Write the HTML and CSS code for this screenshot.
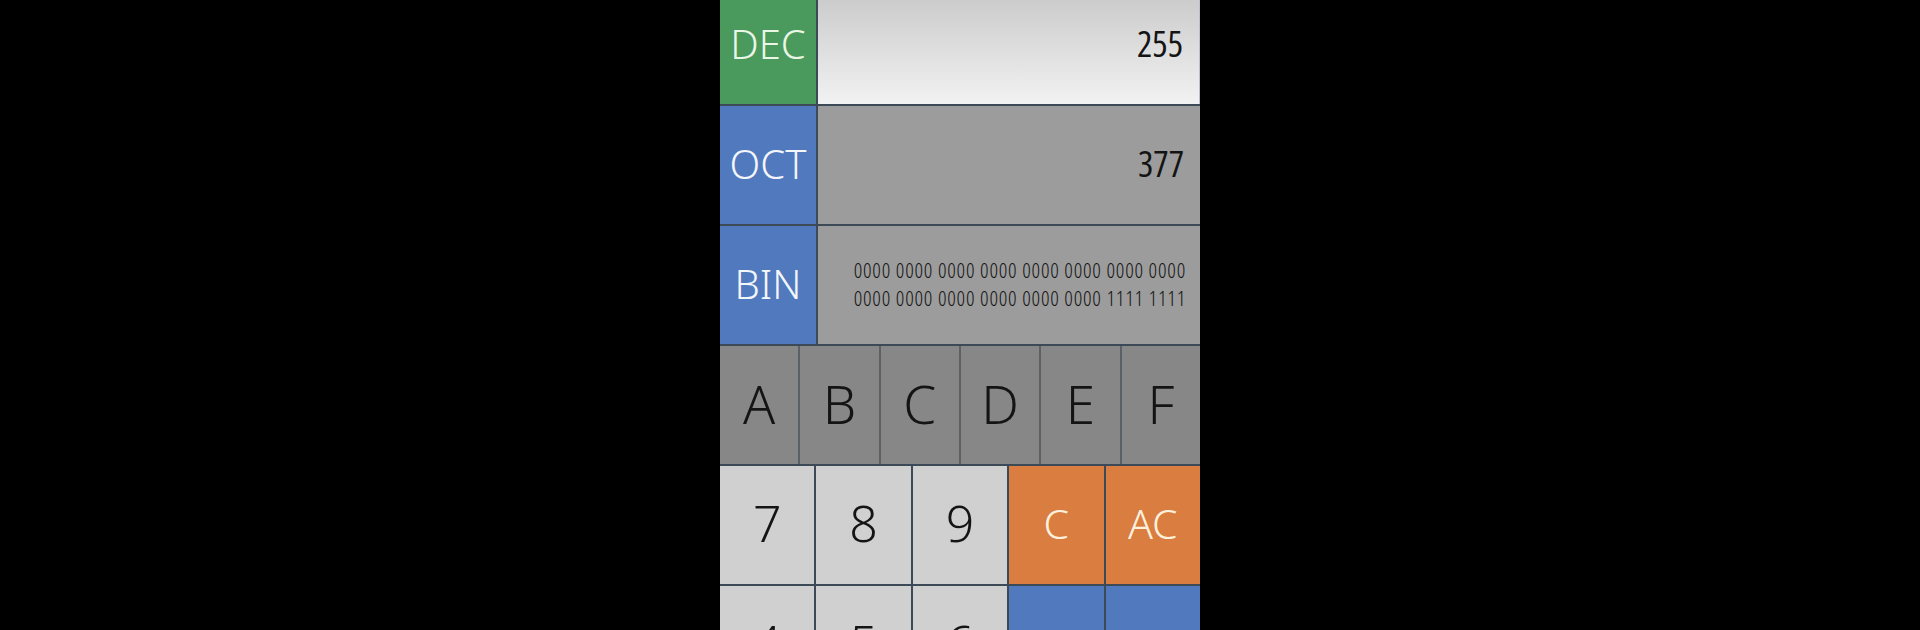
FILE: index.html
```html
<!DOCTYPE html>
<html>
<head>
    <meta http-equiv="Content-Type" content="text/html; charset=utf-8"/>
    <title>Hex Calculator</title>
    <link rel="stylesheet" href="styles.css">
</head>
<body>
<div class="calc">
    <div class="base-row first">
        <div class="base-label dec">DEC</div>
        <div class="base-value active">255</div>
    </div>
    <div class="base-row">
        <div class="base-label">OCT</div>
        <div class="base-value">377</div>
    </div>
    <div class="base-row">
        <div class="base-label">BIN</div>
        <div class="base-value bin">
            <span>0000 0000 0000 0000 0000 0000 0000 0000</span>
            <span>0000 0000 0000 0000 0000 0000 1111 1111</span>
        </div>
    </div>

    <div class="hex-keys">
        <div class="key hex">A</div>
        <div class="key hex">B</div>
        <div class="key hex">C</div>
        <div class="key hex">D</div>
        <div class="key hex">E</div>
        <div class="key hex">F</div>
    </div>

    <div class="pad-keys">
        <div class="key digit">7</div>
        <div class="key digit">8</div>
        <div class="key digit">9</div>
        <div class="key clear">C</div>
        <div class="key clear">AC</div>

        <div class="key digit">4</div>
        <div class="key digit">5</div>
        <div class="key digit">6</div>
        <div class="key op"></div>
        <div class="key op"></div>
    </div>
</div>
</body>
</html>
```

FILE: styles.css
```css
* {
    box-sizing: border-box;
    font-family: "Open Sans", "DejaVu Sans Condensed", sans-serif;
    font-stretch: 75%;
    font-weight: 300;
    color: #141414;
}

html, body {
    margin: 0;
    height: 100%;
    background: #000;
    overflow: hidden;
}

/* main panel */
.calc {
    width: 480px;
    margin: -14px auto 0;
    display: flex;
    flex-direction: column;
    gap: 2px;
    background: #3c4956;
}

.base-row {
    height: 118px;
    display: flex;
    gap: 2px;
}

.base-label {
    width: 96px;
    display: flex;
    align-items: center;
    justify-content: center;
    padding-bottom: 4px;
    background: #5179bd;
    color: #f3f6fb;
    font-family: "Noto Sans", "Open Sans", sans-serif;
    font-stretch: 87.5%;
    font-size: 40px;
}

.base-label.dec {
    background: #4b9a5d;
    color: #eaf6e6;
}

.base-value {
    flex: 1;
    display: flex;
    align-items: center;
    justify-content: flex-end;
    padding: 0 16px 4px 0;
    background: #9c9c9c;
    font-size: 36px;
    font-weight: 400;
}

.base-value.active {
    background: linear-gradient(#c7c7c7, #f2f2f2);
    border-right: 1px solid #b9c0c7;
}

.base-value.bin {
    flex-direction: column;
    align-items: flex-end;
    justify-content: center;
    font-size: 21px;
    line-height: 28px;
    letter-spacing: 0.8px;
    padding: 0 14px 2px 0;
    white-space: nowrap;
}

/* keys */
.hex-keys {
    display: grid;
    grid-template-columns: repeat(6, 1fr);
    gap: 2px;
    background: #5b6066;
}

.pad-keys {
    display: grid;
    grid-template-columns: repeat(5, 1fr);
    grid-auto-rows: 118px;
    gap: 2px;
    height: 200px;
}

.key {
    height: 118px;
    display: flex;
    align-items: center;
    justify-content: center;
    padding-bottom: 4px;
    font-family: "Noto Sans", "Open Sans", sans-serif;
    font-stretch: 87.5%;
    font-size: 53px;
}

.key.hex {
    background: #878787;
}

.key.digit {
    background: #d0d0d0;
    font-size: 50px;
}

.key.clear {
    background: #d97d40;
    color: #fdf1de;
    font-size: 41px;
}

.key.op {
    background: #5179bd;
}
```
